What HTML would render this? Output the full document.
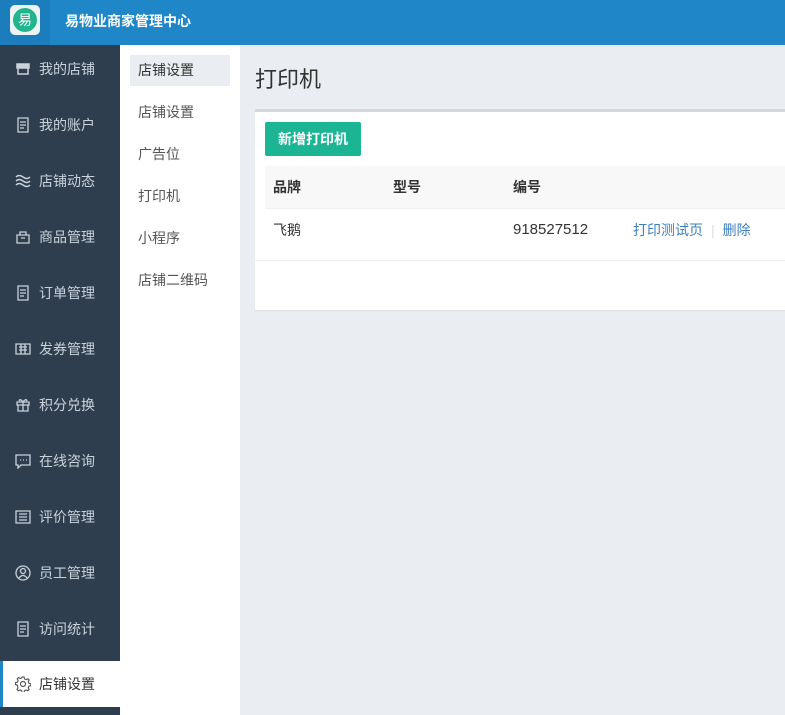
<!DOCTYPE html>
<html><head><meta charset="utf-8"><style>
*{margin:0;padding:0;box-sizing:border-box}
body{width:785px;height:715px;overflow:hidden;background:#eaedf1;font-family:"Liberation Sans","Noto Sans CJK SC",sans-serif;font-size:14px;position:relative}
.top{position:absolute;left:0;top:0;width:785px;height:45px;background:#1f87c8}
.logoarea{position:absolute;left:0;top:0;width:50px;height:45px;background:#1b7dbb}
.logo{position:absolute;left:10px;top:5px;width:30px;height:30px;border-radius:5px;background:#eef3f3}
.logo div{position:absolute;left:3px;top:3px;width:24px;height:24px;border-radius:50%;background:#22b48f;color:#fff;font-size:14px;line-height:24px;text-align:center}
.title{position:absolute;left:65px;top:0;line-height:42px;color:#fff;font-size:14px;font-weight:bold}
.side{position:absolute;left:0;top:45px;width:120px;height:670px;background:#2f3e4f}
.it{position:absolute;left:0;width:120px;height:46px;color:#c9d2db;font-size:14px;line-height:46px;padding-left:39px}
.it svg{position:absolute;left:15px;top:15px}
.it.act{background:#fff;color:#333;border-left:3px solid #1f87c8;padding-left:36px}
.it.act svg{left:12px}
.sub{position:absolute;left:120px;top:45px;width:120px;height:670px;background:#fff}
.s{position:absolute;left:10px;width:100px;height:31px;line-height:31px;padding-left:8px;color:#555;font-size:14px}
.s.a{background:#eaedf1;color:#333}
h1{position:absolute;left:255px;top:62px;font-size:22px;font-weight:normal;color:#333}
.card{position:absolute;left:255px;top:109px;width:530px;height:201px;background:#fff;border-top:3px solid #d5d9de;box-shadow:0 1px 1px #ddd}
.btn{position:absolute;left:10px;top:10px;width:96px;height:34px;background:#1bb593;border-radius:2px;color:#fff;font-weight:bold;line-height:34px;text-align:center;font-size:14px}
.th{position:absolute;left:10px;top:54px;width:520px;height:43px;background:#f8f8f8;border-bottom:1px solid #eee;font-weight:bold;color:#333;line-height:43px}
.tr{position:absolute;left:10px;top:97px;width:520px;height:52px;line-height:42px;color:#333}
.line{position:absolute;left:0;top:148px;width:530px;height:1px;background:#eee}
.c{position:absolute}
a{color:#3d7fb8;text-decoration:none}
</style></head><body>
<div class="top"><div class="logoarea"></div><div class="logo"><div>易</div></div><div class="title">易物业商家管理中心</div></div>
<div class="side">
<div class="it" style="top:1px"><svg width="16" height="16" viewBox="0 0 16 16" fill="none" stroke="#c9d2db" stroke-width="1.5"><path d="M2 3h12v4H2z" fill="#c9d2db"/><path d="M3 7v6h10V7"/></svg>我的店铺</div>
<div class="it" style="top:57px"><svg width="16" height="16" viewBox="0 0 16 16" fill="none" stroke="#c9d2db" stroke-width="1.3"><path d="M3 1h10v14H3zM5 5h6M5 8h6M5 11h4"/></svg>我的账户</div>
<div class="it" style="top:113px"><svg width="16" height="16" viewBox="0 0 16 16" fill="none" stroke="#c9d2db" stroke-width="1.5"><path d="M1 4q3-3 7 0t7 0M1 8q3-3 7 0t7 0M1 12q3-3 7 0t7 0"/></svg>店铺动态</div>
<div class="it" style="top:169px"><svg width="16" height="16" viewBox="0 0 16 16" fill="none" stroke="#c9d2db" stroke-width="1.3"><path d="M2 6h12v8H2zM5 6V3h6v3M6 9h4"/></svg>商品管理</div>
<div class="it" style="top:225px"><svg width="16" height="16" viewBox="0 0 16 16" fill="none" stroke="#c9d2db" stroke-width="1.3"><path d="M3 1h10v14H3zM5 5h6M5 8h6M5 11h4"/></svg>订单管理</div>
<div class="it" style="top:281px"><svg width="16" height="16" viewBox="0 0 16 16" fill="none" stroke="#c9d2db" stroke-width="1.3"><path d="M1 3h14v10H1zM4 6h8M4 9h8M6 3v10M10 3v10"/></svg>发券管理</div>
<div class="it" style="top:337px"><svg width="16" height="16" viewBox="0 0 16 16" fill="none" stroke="#c9d2db" stroke-width="1.3"><path d="M2 5h12v3H2zM3 8h10v6H3zM8 5v9M8 5Q5 1 4 4M8 5q3-4 4-1"/></svg>积分兑换</div>
<div class="it" style="top:393px"><svg width="16" height="16" viewBox="0 0 16 16" fill="none" stroke="#c9d2db" stroke-width="1.3"><path d="M1 2h14v10H6l-3 3v-3H1z"/><path d="M5 7h1M8 7h1M11 7h1"/></svg>在线咨询</div>
<div class="it" style="top:449px"><svg width="16" height="16" viewBox="0 0 16 16" fill="none" stroke="#c9d2db" stroke-width="1.3"><path d="M1 2h14v12H1zM4 5h8M4 8h8M4 11h8"/></svg>评价管理</div>
<div class="it" style="top:505px"><svg width="16" height="16" viewBox="0 0 16 16" fill="none" stroke="#c9d2db" stroke-width="1.3"><circle cx="8" cy="8" r="7"/><circle cx="8" cy="6" r="2.5"/><path d="M4 13q4-5 8 0"/></svg>员工管理</div>
<div class="it" style="top:561px"><svg width="16" height="16" viewBox="0 0 16 16" fill="none" stroke="#c9d2db" stroke-width="1.3"><path d="M3 1h10v14H3zM5 5h6M5 8h6M5 11h4"/></svg>访问统计</div>
<div class="it act" style="top:616px"><svg width="16" height="16" viewBox="0 0 16 16" fill="none" stroke="#555" stroke-width="1.2"><circle cx="8" cy="8" r="2.5"/><path d="M7 1h2l.5 2 1.7.8 1.8-1 1.4 1.4-1 1.8.8 1.7 2 .5v2l-2 .5-.8 1.7 1 1.8-1.4 1.4-1.8-1-1.7.8-.5 2H7l-.5-2-1.7-.8-1.8 1-1.4-1.4 1-1.8L1.8 9.5 0 9V7l2-.5.8-1.7-1-1.8 1.4-1.4 1.8 1 1.7-.8z" transform="translate(0.5 0) scale(.95)"/></svg>店铺设置</div>
</div>
<div class="sub">
<div class="s a" style="top:10px">店铺设置</div>
<div class="s" style="top:52px">店铺设置</div>
<div class="s" style="top:94px">广告位</div>
<div class="s" style="top:136px">打印机</div>
<div class="s" style="top:178px">小程序</div>
<div class="s" style="top:220px">店铺二维码</div>
</div>
<h1>打印机</h1>
<div class="card">
<div class="btn">新增打印机</div>
<div class="th"><span class="c" style="left:8px">品牌</span><span class="c" style="left:128px">型号</span><span class="c" style="left:248px">编号</span></div>
<div class="tr"><span class="c" style="left:8px">飞鹅</span><span class="c" style="left:248px;font-size:15px">918527512</span><span class="c" style="left:368px"><a>打印测试页</a><span style="color:#ddd;margin:0 8px">|</span><a>删除</a></span></div>
<div class="line"></div>
</div>
</body></html>
